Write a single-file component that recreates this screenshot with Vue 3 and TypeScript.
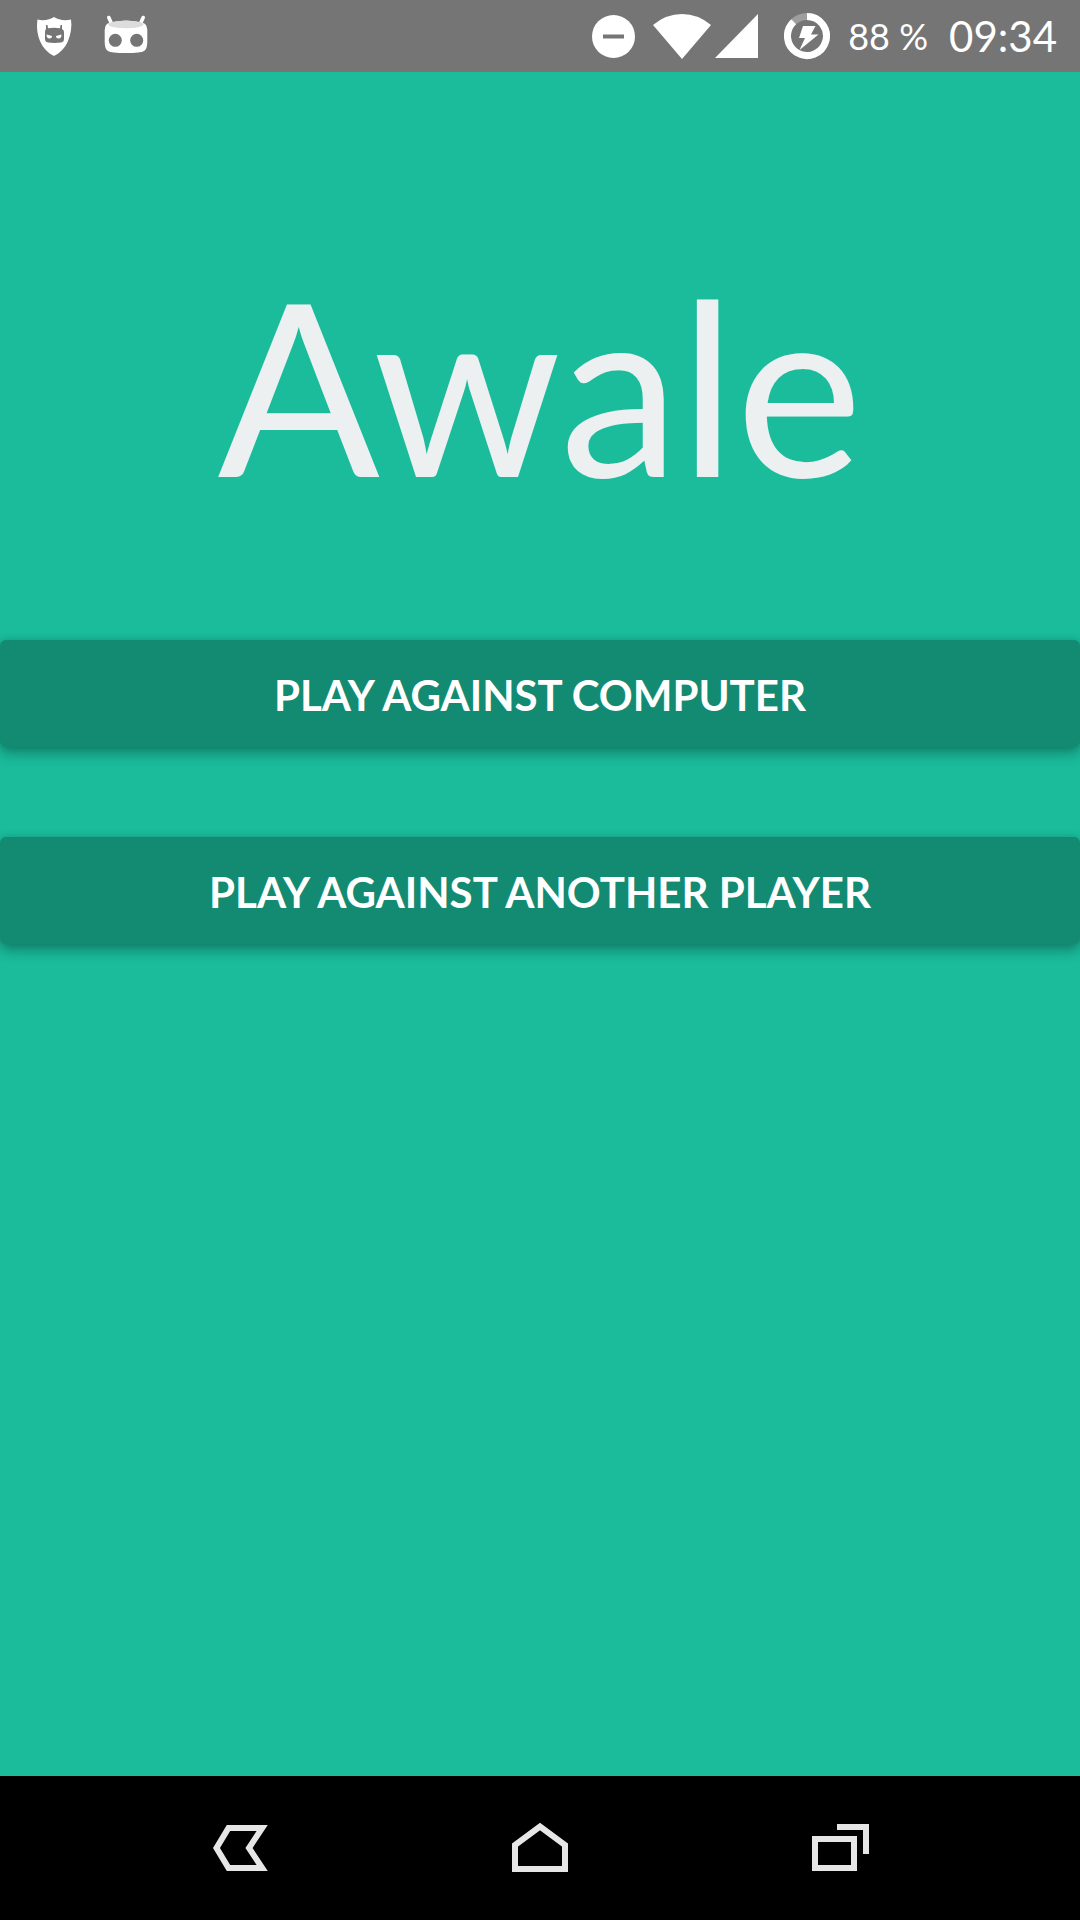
<script setup lang="ts">
const title = 'Awale'
const battery = '88 %'
const clock = '09:34'
const modes: string[] = ['Play against computer', 'Play against another player']
</script>

<template>
  <div class="screen">
    <header class="status">
      <div class="notifications">
        <svg width="72" height="72" viewBox="0 0 72 72" aria-hidden="true">
          <path fill="#fff" d="M36 17C32 20 25 21 19.500 19.500C18.500 26 19 34 22 41C25 48 30 53 36 56C42 53 47 48 50 41C53 34 54 26 53 19.500C47 21 40 20 36 17Z" />
          <path fill="#757575" d="M28 25h1.500l.5 3.200q6-.9 12 0l.5-3.200h1.500v4q2 1 2 3v7q0 3-3 3.500q-6.500.8-13 0q-3-.5-3-3.500v-7q0-2 1-3Z" />
          <path fill="#fff" d="M28.500 34.500l5.500 1.500q0 2.500-2.700 2.500t-2.800-4ZM43.500 34.500l-5.500 1.500q0 2.500 2.700 2.500t2.800-4Z" />
        </svg>
        <svg width="72" height="72" viewBox="0 0 72 72" aria-hidden="true">
          <path d="M18.800 17.500l2.700 6M53.200 17.500l-2.700 6" stroke="#fff" stroke-width="3.600" stroke-linecap="round" />
          <path fill="#fff" d="M19 23Q36 18 53 23Q57 24 57.300 30V42Q57.300 49 54 51Q51 53 36 53T18 51Q14.700 49 14.700 42V30Q15 24 19 23Z" />
          <ellipse cx="36" cy="24.500" rx="17.500" ry="3.800" fill="#dcdcdc" />
          <circle cx="25.300" cy="40.300" r="6.500" fill="#757575" />
          <circle cx="46.700" cy="40.300" r="6.500" fill="#757575" />
        </svg>
      </div>
      <div class="system">
        <svg width="44" height="72" viewBox="0 0 44 72" aria-hidden="true">
          <circle cx="22.500" cy="36.500" r="21.500" fill="#fff" />
          <path d="M12 34.500h21v4H12Z" fill="#757575" />
        </svg>
        <svg class="wifi" width="58" height="72" viewBox="0 0 58 72" aria-hidden="true">
          <path fill="#fff" d="M0 25Q13 14 29 14T58 25L29 59Z" />
        </svg>
        <svg class="signal" width="44" height="72" viewBox="0 0 44 72" aria-hidden="true">
          <path fill="#fff" d="M43 14V58H0Z" />
        </svg>
        <svg class="charge" width="46" height="72" viewBox="0 0 46 72" aria-hidden="true">
          <circle cx="23" cy="36" r="19.500" fill="none" stroke="#9e9e9e" stroke-width="7" />
          <path d="M23 16.500A19.500 19.500 0 1 1 9.700 21.700" fill="none" stroke="#fff" stroke-width="7" />
          <path fill="#fff" d="M19 26H31.500L27 34.500H34.500L15.500 50L21 38H15Z" />
        </svg>
        <span class="battery">{{ battery }}</span>
        <time class="clock">{{ clock }}</time>
      </div>
    </header>

    <main class="menu">
      <h1>{{ title }}</h1>
      <div class="modes">
        <button v-for="mode in modes" :key="mode" type="button" class="mode">{{ mode }}</button>
      </div>
    </main>

    <nav class="navbar">
      <button type="button" class="key" aria-label="Back">
        <svg width="72" height="72" viewBox="0 0 72 72" fill="none" stroke="#e6e6e6" stroke-width="6">
          <path d="M24.500 16H58.200L45 36L58.200 56H24.500L12.500 36Z" />
        </svg>
      </button>
      <button type="button" class="key" aria-label="Home">
        <svg width="72" height="72" viewBox="0 0 72 72" fill="none" stroke="#e6e6e6" stroke-width="6">
          <path d="M11 57V33L36 14.500L61 33V57Z" />
        </svg>
      </button>
      <button type="button" class="key" aria-label="Recent apps">
        <svg width="72" height="72" viewBox="0 0 72 72" fill="none" stroke="#e6e6e6" stroke-width="6">
          <path d="M11 27H50V56H11ZM33 15H62V42" />
        </svg>
      </button>
    </nav>
  </div>
</template>

<style>
body {
  margin: 0;
  background: #1abc9c;
}
</style>

<style scoped>
.screen {
  display: flex;
  flex-direction: column;
  min-height: 100vh;
  overflow: hidden;
  background: #1abc9c;
  font-family: Lato, "Open Sans", sans-serif;
}

svg {
  display: block;
  flex: none;
}

.status {
  display: flex;
  justify-content: space-between;
  height: 72px;
  padding: 0 23px 0 18px;
  background: #757575;
  color: #fff;
}

.notifications,
.system {
  display: flex;
  align-items: center;
}

.wifi {
  margin-left: 18px;
}

.signal {
  margin-left: 4px;
}

.charge {
  margin-left: 25px;
}

.battery {
  margin-left: 18px;
  font-size: 36px;
  line-height: 72px;
}

.clock {
  margin-left: 21px;
  font-size: 42px;
  line-height: 74px;
}

.menu {
  flex: 1;
  padding-top: 168px;
}

h1 {
  margin: 0;
  color: #ecf0f1;
  font-size: 240px;
  font-weight: 400;
  line-height: 288px;
  text-align: center;
}

.modes {
  display: flex;
  flex-direction: column;
  gap: 90px;
  margin-top: 112px;
}

.mode {
  height: 107px;
  padding: 2px 24px 0;
  border: 0;
  border-radius: 6px;
  background: #138b72;
  box-shadow: 0 6px 14px rgba(0, 0, 0, 0.32), 0 0 6px rgba(0, 0, 0, 0.1);
  color: #fff;
  font-family: inherit;
  font-size: 42px;
  font-weight: 700;
  line-height: 52px;
  text-transform: uppercase;
}

.navbar {
  display: flex;
  justify-content: center;
  height: 144px;
  padding: 0 90px;
  background: #000;
}

.key {
  display: flex;
  flex: 1;
  align-items: center;
  justify-content: center;
  padding: 0;
  border: 0;
  background: none;
}
</style>
